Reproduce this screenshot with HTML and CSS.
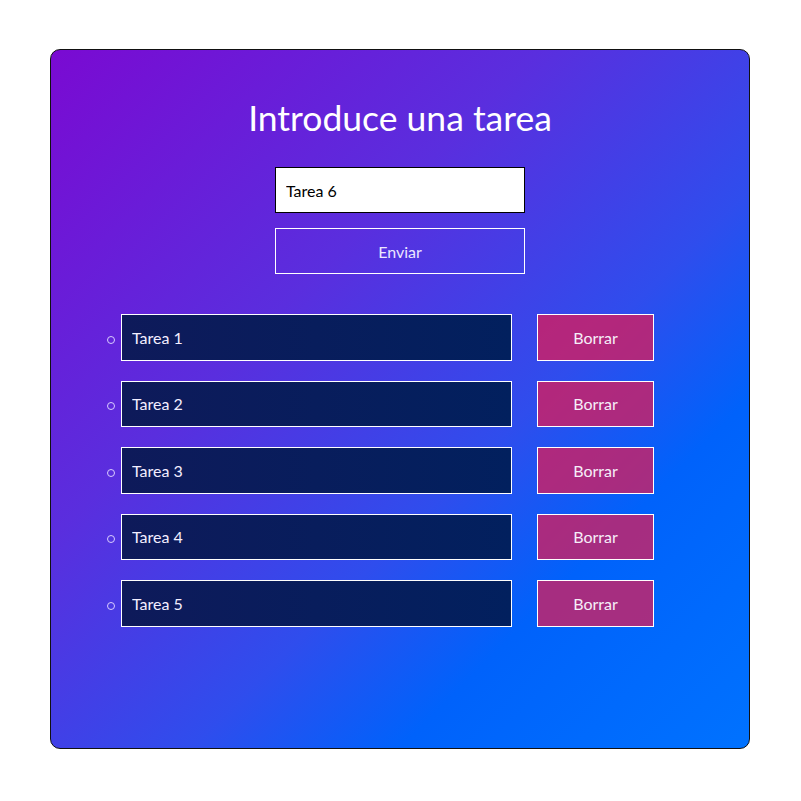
FILE: index.html
```html
<!DOCTYPE html>
<html lang="es">
<head>
<meta charset="utf-8">
<title>Tareas</title>
<link rel="stylesheet" href="styles.css">
</head>
<body>
<main class="card">
  <h1 class="title">Introduce una tarea</h1>
  <form class="new-task">
    <input class="task-input" type="text" value="Tarea 6">
    <button class="send-btn" type="button">Enviar</button>
  </form>
  <ul class="task-list">
    <li class="task"><input class="task-field" type="text" value="Tarea 1"><button class="delete-btn" type="button">Borrar</button></li>
    <li class="task"><input class="task-field" type="text" value="Tarea 2"><button class="delete-btn" type="button">Borrar</button></li>
    <li class="task"><input class="task-field" type="text" value="Tarea 3"><button class="delete-btn" type="button">Borrar</button></li>
    <li class="task"><input class="task-field" type="text" value="Tarea 4"><button class="delete-btn" type="button">Borrar</button></li>
    <li class="task"><input class="task-field" type="text" value="Tarea 5"><button class="delete-btn" type="button">Borrar</button></li>
  </ul>
</main>
</body>
</html>
```
FILE: styles.css
```css
* { box-sizing: border-box; }
html, body { margin: 0; background: #fff; }
body { font-family: "Lato", "Noto Sans", sans-serif; }

.card {
  width: 700px;
  height: 700px;
  margin: 49px auto 0 50px;
  border: 1px solid #111;
  border-radius: 10px;
  padding-top: 48px;
  background: linear-gradient(135deg, #7a0ad2 0%, #5a2ede 35%, #2f4ded 60%, #0062fb 75%, #0072ff 100%);
}

.title {
  margin: 0;
  font-weight: 400;
  font-size: 35.5px;
  line-height: 40px;
  text-align: center;
  color: #fff;
}

.new-task {
  margin-top: 29px;
  display: flex;
  flex-direction: column;
  align-items: center;
  gap: 15px;
}

.task-input,
.send-btn {
  width: 250px;
  height: 46px;
  font-family: inherit;
  font-size: 16px;
  margin: 0;
}

.task-input {
  border: 1px solid #000;
  background: #fff;
  color: #000;
  padding: 0 10px;
}

.send-btn {
  border: 1px solid #fff;
  background: transparent;
  color: #ece6ff;
}

.task-list {
  list-style: none;
  margin: 40px 0 0;
  padding: 0 0 0 56px;
  display: flex;
  flex-direction: column;
  gap: 20px;
}

.task {
  display: flex;
  align-items: center;
  height: 46.5px;
}

.task::before {
  content: "";
  width: 6px;
  height: 6px;
  border: 1px solid #d9ccff;
  border-radius: 50%;
  margin: 5px 6px 0 0;
  flex: none;
}

.task-field {
  width: 391px;
  height: 100%;
  margin: 0;
  border: 1px solid #fff;
  padding: 0 10px;
  background: linear-gradient(90deg, #0e1a5a, #02205e);
  color: #f3eeff;
  font-family: inherit;
  font-size: 16px;
}

.delete-btn {
  width: 117px;
  height: 100%;
  margin: 0 0 0 25px;
  border: 1px solid #fff;
  background: rgba(230, 25, 80, 0.72);
  color: #f6eef8;
  font-family: inherit;
  font-size: 16px;
}
```
